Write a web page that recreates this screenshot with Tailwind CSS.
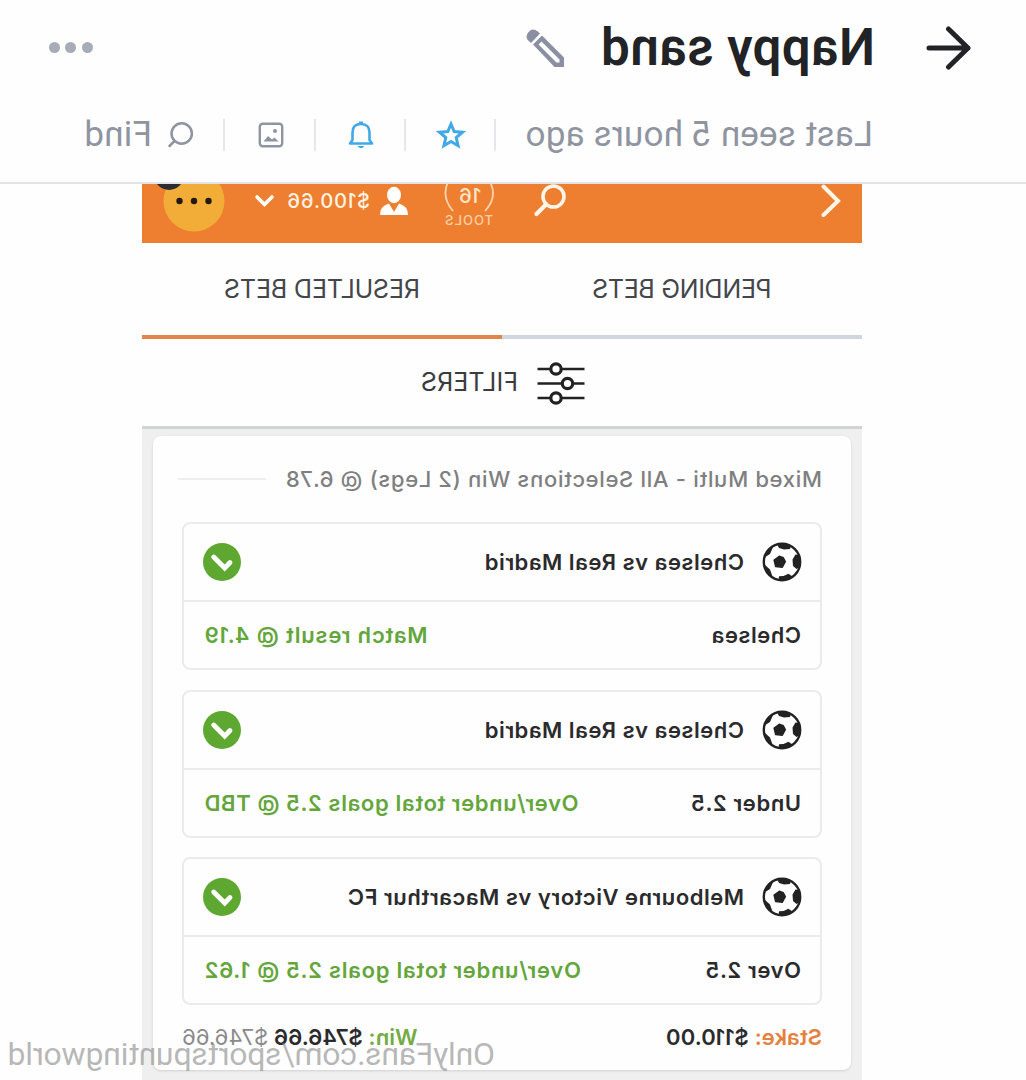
<!DOCTYPE html>
<html lang="en">
<head>
  <meta charset="UTF-8">
  <meta name="viewport" content="width=device-width, initial-scale=1.0">
  <title>Nappy sand</title>
  <script src="https://cdn.jsdelivr.net/npm/@tailwindcss/browser@4"></script>
</head>
<body class="bg-[#fefefe] font-['Roboto',sans-serif]">

  <!-- Shared icons -->
  <svg class="hidden">
    <symbol id="ball" viewBox="0 0 40 40">
      <circle cx="20" cy="20" r="18.2" fill="#fff" stroke="#222" stroke-width="2.4"/>
      <path fill="#222" stroke="#222" stroke-width="1.500" stroke-linejoin="round" d="M22.700 14.300l5.200 3.700-1.600 6.600-6.600.6-3-5.600 2-3.800z"/>
      <path fill="#222" d="M11 3.500q7-3.500 14-1.500l-2 4-5 1.600-6-.6zM2.500 13l4-.5 3 5-.5 6.500-3.500 3-3.500-2zM9.500 34.500l4-2.800 5 2.300 4.500.2.500 4.300q-8 .5-14-4zM29.500 34.500l2.500-7 5-4.500.5 2q-1.500 6-8 9.500zM28.500 4q6 3 8.500 9l-1 1.500-4-2.500z"/>
    </symbol>
    <symbol id="tick" viewBox="0 0 38 38">
      <circle cx="19" cy="19" r="19" fill="#5ea832"/>
      <path d="M11 19.500l5.300 5.500L27.300 14" fill="none" stroke="#fff" stroke-width="4.800" stroke-linecap="round" stroke-linejoin="miter"/>
    </symbol>
  </svg>

  <!-- Whole page is flipped horizontally -->
  <div class="relative w-[1026px] h-[1080px] overflow-hidden -scale-x-100">

    <header class="h-[184px] border-b-2 border-[#e3e4e7]">
      <div class="flex items-center h-[94px] pl-[54px] pr-[49px]">
        <svg class="w-[46px] h-[46px] shrink-0" viewBox="0 0 46 46" fill="none" stroke="#212326" stroke-width="5" stroke-linecap="round" stroke-linejoin="round">
          <path d="M43 24H4M23.500 5L4 24l19.500 19"/>
        </svg>
        <h1 class="ml-[51px] w-[275px] text-[51px] leading-none font-semibold tracking-[0.5px] text-[#212326] whitespace-nowrap">Nappy sand</h1>
        <svg class="ml-[35px] mt-[3px] w-[39px] h-[39px]" viewBox="0 0 39 39">
          <path fill="#8a8fa1" fill-rule="evenodd" d="M1 28.500L23 6.500l9 9L10.500 38H1zM5.500 30.500V33.500h3l18-18-3-3z"/>
          <path fill="#8a8fa1" d="M25 4.500l2.600-2.200q4.400-3.700 8.800.6 4 4.500.3 8.600L34 14z"/>
        </svg>
        <div class="ml-auto flex gap-[5.5px]">
          <span class="size-[11px] rounded-full bg-[#a6adb6]"></span>
          <span class="size-[11px] rounded-full bg-[#a6adb6]"></span>
          <span class="size-[11px] rounded-full bg-[#a6adb6]"></span>
        </div>
      </div>

      <div class="flex items-center h-[81px] pl-[153px] text-[35px] leading-none text-[#8f94a1] whitespace-nowrap">
        <span class="w-[377px] tracking-[0.2px]">Last seen 5 hours ago</span>
        <div class="flex items-center justify-center w-[90px] h-8 border-l-2 border-[#e6e7ea] pr-[3px]">
          <svg class="size-[30px]" viewBox="0 0 30 30" fill="none" stroke="#42a9e6" stroke-width="3">
            <path d="M15 4l3.200 7.500 8.300.7-6.300 5.400 1.900 8.100L15 21.400l-7.100 4.300 1.900-8.100-6.300-5.400 8.300-.7z"/>
          </svg>
        </div>
        <div class="flex items-center justify-center w-[90px] h-8 border-l-2 border-[#e6e7ea] pr-[3px]">
          <svg class="size-[30px]" viewBox="0 0 30 30">
            <path fill="none" stroke="#42a9e6" stroke-width="2.600" stroke-linejoin="round" d="M4 23.500l2.500-3.500v-7.500q0-8.500 8.500-8.500t8.500 8.500V20l2.500 3.500z"/>
            <path fill="#42a9e6" d="M13 1.500h4V5h-4zM11.500 26h7q-3.500 4.500-7 0z"/>
          </svg>
        </div>
        <div class="flex items-center justify-center w-[91px] h-8 border-l-2 border-[#e6e7ea] pr-[4px]">
          <svg class="size-[26px]" viewBox="0 0 26 26">
            <rect x="1.800" y="1.800" width="22.400" height="22.400" rx="3" fill="none" stroke="#8f94a1" stroke-width="2.400"/>
            <circle cx="9" cy="9" r="2" fill="#8f94a1"/>
            <path fill="#8f94a1" d="M5.500 19.500l4-4 2.500 2 4-3.500 4.500 5.500z"/>
          </svg>
        </div>
        <div class="flex items-center h-8 border-l-2 border-[#e6e7ea] pl-[29px]">
          <svg class="size-[27px]" viewBox="0 0 27 27" fill="none" stroke="#8f94a1" stroke-width="2.500" stroke-linecap="round">
            <circle cx="12.300" cy="12.500" r="10.200"/>
            <path d="M19.500 20l5 5"/>
          </svg>
          <span class="ml-[15px] tracking-[0.3px]">Find</span>
        </div>
      </div>
    </header>

    <main class="ml-[164px] w-[720px] h-[896px] flex flex-col font-['Inter',sans-serif]">

      <!-- Betting app bar, cut off by the header -->
      <div class="relative h-[59px] shrink-0 overflow-hidden bg-[#ee7f30] text-[#fff3e2]">
        <svg class="absolute inset-0 w-[720px] h-[59px]" viewBox="0 0 720 59" fill="none">
          <path d="M38.500 2.500L24 17l14.500 14" stroke="#fff6ea" stroke-width="4" stroke-linecap="round"/>
          <circle cx="308.500" cy="12.500" r="10.500" stroke="#fff6ea" stroke-width="3.600"/>
          <path d="M316 20.500l9.500 9.500" stroke="#fff6ea" stroke-width="4.200" stroke-linecap="round"/>
          <path d="M377 27Q364 13 372 -2M409 27q12-14 5-29" stroke="#fbd3ac" stroke-width="1.800"/>
          <ellipse cx="468" cy="11" rx="7" ry="8.200" fill="#fff"/>
          <path fill="#fff" d="M454 31q0-9 9-11.500l5 8.500 5-8.500q9 2.500 9 11.500z"/>
          <path d="M590 13l7.500 7.500 7.500-7.500" stroke="#fff" stroke-width="3.600" stroke-linecap="round"/>
          <circle cx="668" cy="17" r="30.500" fill="#f2ad38"/>
          <circle cx="693" cy="-9" r="15" fill="#2b2c33"/>
          <circle cx="653.500" cy="17" r="3.200" fill="#221a12"/>
          <circle cx="668" cy="17" r="3.200" fill="#221a12"/>
          <circle cx="682.500" cy="17" r="3.200" fill="#221a12"/>
        </svg>
        <span class="absolute left-[381px] top-0 text-[20px] leading-[24px] tracking-[1px] font-medium text-[#ffe6c8]">16</span>
        <span class="absolute left-[369px] top-[28px] text-[13px] leading-4 tracking-[1px] font-medium text-[#fbd0a6]">TOOLS</span>
        <span class="absolute left-[492px] top-[5px] text-[20px] leading-6 tracking-[0.9px] font-medium">$100.66</span>
      </div>

      <nav class="flex h-24 shrink-0 text-[25px] text-[#43464b] whitespace-nowrap">
        <div class="w-1/2 flex items-center justify-center border-b-4 border-[#cfd6df] pt-[2px] tracking-[-0.3px]">PENDING BETS</div>
        <div class="w-1/2 flex items-center justify-center border-b-4 border-[#e0864b] pt-[2px] tracking-[-0.1px]">RESULTED BETS</div>
      </nav>

      <div class="flex items-center h-[90px] shrink-0 border-b-3 border-[#d1d3d6] pl-[277px] text-[25px] text-[#3a3c40]">
        <svg class="w-12 h-[44px]" viewBox="0 0 48 44" fill="none" stroke="#222" stroke-width="2.600">
          <path d="M.5 8h47M.5 22.500h47M.5 37h47"/>
          <g fill="#fff" stroke-width="3.200">
            <circle cx="29" cy="8" r="5.200"/>
            <circle cx="17.500" cy="22.500" r="5.200"/>
            <circle cx="29" cy="37" r="5.200"/>
          </g>
        </svg>
        <span class="ml-[19px] mt-px tracking-[0.1px]">FILTERS</span>
      </div>

      <section class="grow bg-[#efefef] pt-[7px] pl-[11px]">
        <div class="w-[698px] h-[634px] rounded-lg bg-[#fefefe] shadow-sm pl-[29px] text-[22px] leading-none font-semibold text-[#2b2b2d] whitespace-nowrap">
          <div class="flex items-center h-[86px] text-[#7f7f81]">
            <span class="w-[556px] font-medium tracking-[0.68px]">Mixed Multi - All Selections Win (2 Legs) @ 6.78</span>
            <span class="w-[88px] h-[2px] bg-[#eeeeee]"></span>
          </div>

          <div class="w-[640px] flex flex-col gap-[19.5px]">
            <div class="h-[148px] rounded-lg border-2 border-[#ebebeb]">
              <div class="flex items-center h-[78px] border-b-2 border-[#ebebeb] pl-[18px] pr-[19px]">
                <svg class="size-10"><use href="#ball"/></svg>
                <span class="ml-[18px] tracking-[0.5px]">Chelsea vs Real Madrid</span>
                <svg class="ml-auto size-[38px]"><use href="#tick"/></svg>
              </div>
              <div class="flex items-center justify-between h-[66px] pl-[19px] pr-5">
                <span class="tracking-[0.5px]">Chelsea</span>
                <span class="tracking-[0.8px] text-[#64a63c]">Match result @ 4.19</span>
              </div>
            </div>

            <div class="h-[148px] rounded-lg border-2 border-[#ebebeb]">
              <div class="flex items-center h-[78px] border-b-2 border-[#ebebeb] pl-[18px] pr-[19px]">
                <svg class="size-10"><use href="#ball"/></svg>
                <span class="ml-[18px] tracking-[0.5px]">Chelsea vs Real Madrid</span>
                <svg class="ml-auto size-[38px]"><use href="#tick"/></svg>
              </div>
              <div class="flex items-center justify-between h-[66px] pl-[19px] pr-5">
                <span class="tracking-[0.6px]">Under 2.5</span>
                <span class="tracking-[0.6px] text-[#64a63c]">Over/under total goals 2.5 @ TBD</span>
              </div>
            </div>

            <div class="h-[148px] rounded-lg border-2 border-[#ebebeb]">
              <div class="flex items-center h-[78px] border-b-2 border-[#ebebeb] pl-[18px] pr-[19px]">
                <svg class="size-10"><use href="#ball"/></svg>
                <span class="ml-[18px] tracking-[0.5px]">Melbourne Victory vs Macarthur FC</span>
                <svg class="ml-auto size-[38px]"><use href="#tick"/></svg>
              </div>
              <div class="flex items-center justify-between h-[66px] pl-[19px] pr-5">
                <span class="tracking-[0.6px]">Over 2.5</span>
                <span class="tracking-[0.7px] text-[#64a63c]">Over/under total goals 2.5 @ 1.62</span>
              </div>
            </div>
          </div>

          <div class="flex items-center justify-between w-[640px] h-[64px]">
            <span class="tracking-[0.1px]"><span class="text-[#e5813f]">Stake:</span> $110.00</span>
            <span class="tracking-[0.1px]"><span class="text-[#74ab45]">Win:</span> <span>$746.66</span> <span class="font-normal text-[#8a8a8c]">$746.66</span></span>
          </div>
        </div>
      </section>
    </main>

    <!-- Watermark -->
    <div class="absolute left-[531px] top-[1036px] text-[32px] leading-9 tracking-[-0.2px] text-[#888]/60 whitespace-nowrap">OnlyFans.com/sportspuntingworld</div>
  </div>

</body>
</html>
